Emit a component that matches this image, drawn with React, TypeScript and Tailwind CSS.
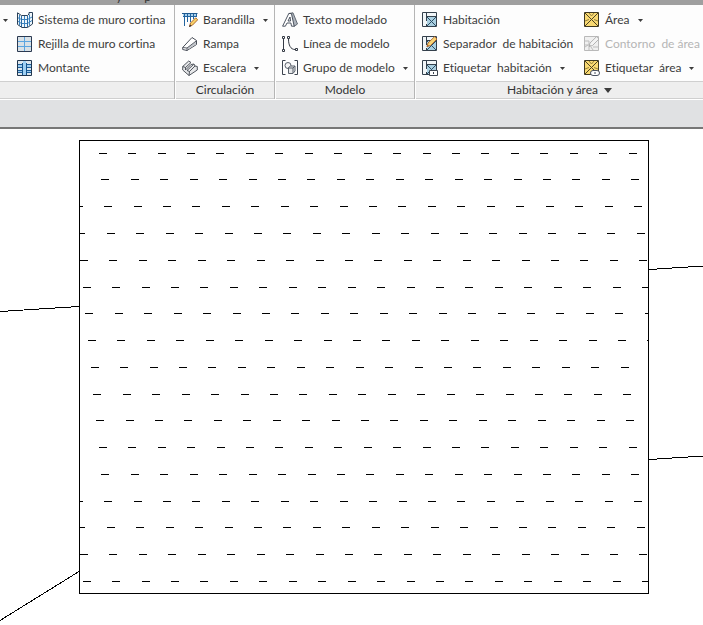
import React from 'react';

type Item = {
  label: string;
  icon: React.ReactNode;
  menu?: boolean;
  disabled?: boolean;
};

const Svg = ({ children }: { children: React.ReactNode }) => (
  <svg width="16" height="16" viewBox="0 0 16 16" fill="none" className="shrink-0" aria-hidden="true">
    {children}
  </svg>
);

const CurtainSystemIcon = () => (
  <Svg>
    <path d="M.5 1.5 4.5 4H10L11.500 1.500H15.500V12L10.500 15.500 5 15 .5 12Z" fill="#eef6fb" />
    <path d="M2.500 3v10.500M7.500 4v11M12.500 2.500v11M.5 5.500 4.500 7.500H10.500L15 5M.5 9 4.500 11.500H10.500L15 8.500" stroke="#3c84c0" />
    <path d="M4.500 4v11M10.500 4v11" stroke="#2b6ba5" />
    <path d="M.5 12.500V.800L4.500 3.500H10.500L12 2V.500H15.500V12L10.500 15.500H5Z" stroke="#2b4159" />
  </Svg>
);

const CurtainGridIcon = () => (
  <Svg>
    <path d="M.5.5h14v15H.5Z" fill="#d9e1e6" stroke="#2b3950" />
    <path d="M7.500 1v14M1 5.500h13M1 10.500h13" stroke="#5ba5e0" />
  </Svg>
);

const MullionIcon = () => (
  <Svg>
    <path d="M.5.5h14v15H.5Z" fill="#dde6ec" stroke="#21364f" />
    <path d="M1 5h13v2H1ZM1 10h13v2H1Z" fill="#9fcdee" />
    <path d="M1 4.500h13M1 7.500h13M1 10.500h13M1 12.500h13" stroke="#1c5f9c" />
    <path d="M6 1h3v14H6Z" fill="#9fd0f3" />
    <path d="M5.500 3v12M9.500 3v12" stroke="#15548c" />
  </Svg>
);

const RailingIcon = () => (
  <Svg>
    <path d="M1 2h14v3H1Z" fill="#a9d0ec" />
    <path d="M0 1.500h15.500" stroke="#1f5a91" />
    <path d="M1 4.500h14M2.500 2v12M5.500 2v8M8.500 2v8M11.500 2v5M14.500 2v3" stroke="#22649f" />
    <path d="m7.500 14.500 1-3.500 5.200-5.200 2 2-5.200 5.300Z" fill="#f8d268" stroke="#a65b1f" strokeWidth=".9" />
    <path d="m7 15 1-2.500 1.500 1.500Z" fill="#2c2c33" />
  </Svg>
);

const RampIcon = () => (
  <Svg>
    <path d="M.7 11.500 10 1.500 14.500 4.500V8.500L5 14.500.7 13.500Z" fill="#fff" stroke="#4a4f59" />
    <path d="m5.500 11.500 8.500-6v2.700l-8.500 5.500Z" fill="#c3c6cb" />
    <path d="M.7 11.500 5 12 14.200 5M5 12v2.500" stroke="#4a4f59" strokeWidth=".9" />
  </Svg>
);

const StairIcon = () => (
  <Svg>
    <path d="m.7 6.500 6-5.500L9 2.500v2l3-.5 1 2 2.300.500V10L7 15.500.7 10Z" fill="#e6e7e9" />
    <path d="m.7 6.500 6-5.500L9 2.500 3.500 7.500ZM.7 6.500V10L7 15.500 15.300 10V6.500L13 6 7.500 11.500 7 15.500M3.500 7.500v2.500L9 4.500 12 4 13 6M5 10.500 11.500 4.500M7.500 11.500 5 10.500" stroke="#41464f" strokeWidth=".9" />
  </Svg>
);

const ModelTextIcon = () => (
  <Svg>
    <path d="m7 1.500 4-.7L15.500 12 12 14.500Z" fill="#aeb4bc" stroke="#48505c" strokeWidth=".8" />
    <path fillRule="evenodd" d="M.6 14.200 6.800 1.500h2.600l2.800 12.700H9.500L8.900 11H5l-1.600 3.200ZM6 9h2.600L8 5Z" fill="#fff" stroke="#3c4552" strokeWidth=".9" />
  </Svg>
);

const ModelLineIcon = () => (
  <Svg>
    <path d="M1.500 3v10M6.500 3C6.500 9 8.500 13.500 13 13.500" stroke="#343a44" />
    <path d="M.5.500h2v2h-2ZM.5 13.500h2v2h-2ZM5.500.500h2v2h-2ZM13.500 12.500h2v2h-2Z" fill="#fff" stroke="#343a44" />
  </Svg>
);

const ModelGroupIcon = () => (
  <Svg>
    <path d="M3.500.500h-3v14h3M12.500.500h3v14h-3" stroke="#3c434e" />
    <circle cx="6" cy="5.500" r="3" fill="#f4f4f5" stroke="#59606b" />
    <path d="m6.500 7.500 2-1.500h4.500v5L11 13.500H6.500Z" fill="#e6e7e9" stroke="#59606b" />
    <path d="M6.500 8H11v5M11 8l2-2" stroke="#59606b" />
  </Svg>
);

const RoomBase = () => (
  <>
    <path d="M.5.500h14v14H.5Z" fill="#f1f6f8" stroke="#34404c" />
    <path d="M5 5h9v9H5Z" fill="#a9cfe1" />
    <path d="M4.500 1v8M4.500 12v2.500M4.500 4.500H14" stroke="#34404c" />
    <path d="m5 5 9 9M14 5l-9 9" stroke="#2c4d63" />
  </>
);

const Pencil = ({ fill, stroke }: { fill: string; stroke: string }) => (
  <>
    <path d="m5 10.500 1-3.500L12.500.700l2.500 2.300L8.500 9.500Z" fill={fill} stroke={stroke} strokeWidth=".9" />
    <path d="m4.500 11 1-2.500L7 10Z" fill={stroke} />
  </>
);

const RoomIcon = () => <Svg><RoomBase /></Svg>;

const RoomSeparatorIcon = () => (
  <Svg>
    <RoomBase />
    <Pencil fill="#f9d476" stroke="#ad652b" />
  </Svg>
);

const TagRoomIcon = () => (
  <Svg>
    <RoomBase />
    <path d="M7.500 10.500h8v5h-8Z" fill="#fff" stroke="#3e4651" />
    <path d="M11.500 12v2" stroke="#3e4651" />
  </Svg>
);

const AreaBase = () => (
  <>
    <path d="M.5.500h14v14H.5Z" fill="#f9d971" stroke="#3e3820" />
    <path d="m1 1 13 13M14 1 1 14" stroke="#4d4323" />
    <path d="M5 1l2.500 3L10 1M1 9l4-1.500M14 9l-4-1.500" stroke="#8a7838" strokeWidth=".9" />
  </>
);

const AreaIcon = () => <Svg><AreaBase /></Svg>;

const AreaBoundaryIcon = () => (
  <Svg>
    <path d="M.5.500h14v14H.5Z" fill="#f0f0f0" stroke="#b9b9b9" />
    <path d="M1 5h4v4H1M5 14v-3M9 11h5M1 11l3-2M9 14l-2-3" stroke="#bdbdbd" />
    <Pencil fill="#f4f4f4" stroke="#acacac" />
  </Svg>
);

const TagAreaIcon = () => (
  <Svg>
    <AreaBase />
    <rect x="6.500" y="10.500" width="9" height="5" rx="2.500" fill="#fff" stroke="#4b5261" />
    <path d="M11 12v2" stroke="#4b5261" />
  </Svg>
);

const Caret = () => (
  <svg width="5" height="3" viewBox="0 0 5 3" className="shrink-0" aria-hidden="true">
    <path d="M0 0h5L2.500 3Z" fill="#3c3c3c" />
  </svg>
);

const ToolButton = ({ item }: { item: Item }) => (
  <button
    type="button"
    disabled={item.disabled}
    className="flex h-6 items-center gap-[5px] whitespace-pre text-[#3c3c3c] disabled:text-[#b5b5b5]"
  >
    {item.icon}
    <span>{item.label}</span>
    {item.menu && <span className="ml-[3px]"><Caret /></span>}
  </button>
);

const curtain: Item[] = [
  { label: 'Sistema de muro cortina', icon: <CurtainSystemIcon /> },
  { label: 'Rejilla de muro cortina', icon: <CurtainGridIcon /> },
  { label: 'Montante', icon: <MullionIcon /> },
];

const circulation: Item[] = [
  { label: 'Barandilla', icon: <RailingIcon />, menu: true },
  { label: 'Rampa', icon: <RampIcon /> },
  { label: 'Escalera', icon: <StairIcon />, menu: true },
];

const model: Item[] = [
  { label: 'Texto modelado', icon: <ModelTextIcon /> },
  { label: 'Línea de modelo', icon: <ModelLineIcon /> },
  { label: 'Grupo de modelo', icon: <ModelGroupIcon />, menu: true },
];

const rooms: Item[] = [
  { label: 'Habitación', icon: <RoomIcon /> },
  { label: 'Separador  de habitación', icon: <RoomSeparatorIcon /> },
  { label: 'Etiquetar  habitación', icon: <TagRoomIcon />, menu: true },
];

const areas: Item[] = [
  { label: 'Área', icon: <AreaIcon />, menu: true },
  { label: 'Contorno  de área', icon: <AreaBoundaryIcon />, disabled: true },
  { label: 'Etiquetar  área', icon: <TagAreaIcon />, menu: true },
];

const Column = ({ items }: { items: Item[] }) => (
  <div className="flex flex-col items-start">
    {items.map((item) => <ToolButton key={item.label} item={item} />)}
  </div>
);

const Panel = ({ title, className, children }: { title?: React.ReactNode; className: string; children: React.ReactNode }) => (
  <section className={`flex flex-col ${className}`}>
    <div className="flex pt-[3px] pb-[1px]">{children}</div>
    <div className="flex h-[18px] items-center justify-center gap-1.5 border-y border-[#cfcfcf] bg-[#eeeeee]">
      {title}
    </div>
  </section>
);

const HATCH_ROWS = 17;
const HATCH_COLUMNS = 22;

const hatch = Array.from({ length: HATCH_ROWS }, (_, row) =>
  Array.from({ length: HATCH_COLUMNS }, (_, col) => {
    const x = Math.round(98.7 + row * 2.68 + (col - 2) * 29.44);
    const y = Math.round(23.7 + row * 26.76);
    return `M${x} ${y}.5h8`;
  }).join('')
).join('');

const Drawing = () => (
  <svg viewBox="0 0 703 496" className="block w-full bg-white" shapeRendering="crispEdges" fill="none" stroke="#000" role="img" aria-label="Muro">
    <clipPath id="wall">
      <rect x="80" y="12" width="568" height="452" />
    </clipPath>
    <path d={hatch} clipPath="url(#wall)" />
    <path d="M79.500 11.500h569v453h-569Z" />
    <path d="M0 182.500 79 177.500M0 491.500 79 442.500M649 140.500 703 137M649 330.500 703 327" />
  </svg>
);

const App = () => {
  return (
    <main className="min-h-screen bg-white font-[Lato,'Open_Sans',sans-serif] text-xs text-[#333333] [font-variant-ligatures:none]">
      <div className="flex h-[5px] items-end gap-[22px] overflow-hidden bg-[#9f9f9f] pb-[2px] pl-[116px] leading-3">
        <span>y</span>
        <span>p</span>
      </div>
      <div className="flex overflow-hidden bg-[#fdfdfd]">
        <Panel className="w-[174px] shrink-0">
          <div className="flex w-[17px] shrink-0 items-start pt-[11px] pl-[3px]"><Caret /></div>
          <Column items={curtain} />
        </Panel>
        <Panel className="w-[100px] shrink-0 border-l border-[#b5b5b5] pl-px" title="Circulación">
          <div className="pl-[6px]"><Column items={circulation} /></div>
        </Panel>
        <Panel className="w-[140px] shrink-0 border-l border-[#b5b5b5] pl-px" title="Modelo">
          <div className="pl-[6px]"><Column items={model} /></div>
        </Panel>
        <Panel
          className="grow border-l border-[#b5b5b5] pl-px"
          title={
            <>
              Habitación y área
              <svg width="8" height="5" viewBox="0 0 8 5" aria-hidden="true"><path d="M0 0h8L4 5Z" fill="#3c3c3c" /></svg>
            </>
          }
        >
          <div className="w-[168px] shrink-0 pl-[6px]"><Column items={rooms} /></div>
          <Column items={areas} />
        </Panel>
      </div>
      <div className="h-[30px] border-t border-b-2 border-t-white border-b-[#777777] bg-[#e0e1e3]" />
      <Drawing />
    </main>
  );
};

export default App;
